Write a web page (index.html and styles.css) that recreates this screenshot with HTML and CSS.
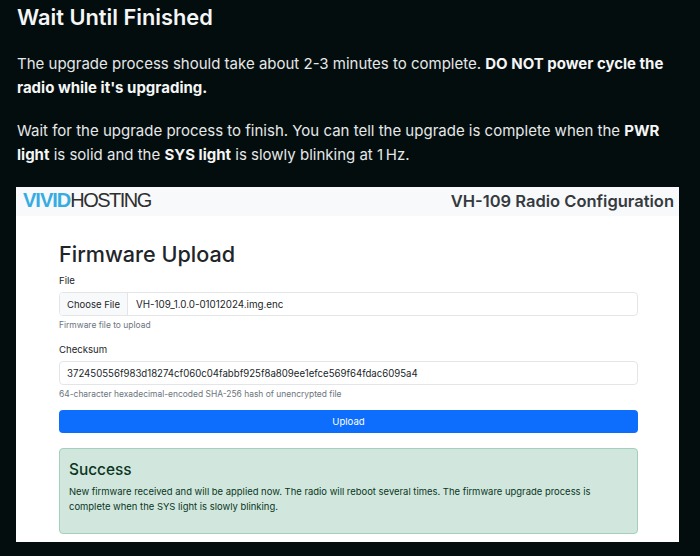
FILE: index.html
```html
<!DOCTYPE html>
<html lang="en">
<head>
<meta charset="utf-8">
<title>Wait Until Finished</title>
<link rel="stylesheet" href="styles.css">
</head>
<body>
<main class="doc">
  <h2 class="doc-title">Wait Until Finished</h2>
  <p class="doc-p">The upgrade process should take about 2-3 minutes to complete. <strong>DO NOT power cycle the radio while it's upgrading.</strong></p>
  <p class="doc-p">Wait for the upgrade process to finish. You can tell the upgrade is complete when the <strong>PWR light</strong> is solid and the <strong>SYS light</strong> is slowly blinking at 1&#8201;Hz.</p>
  <section class="shot">
    <header class="nav">
      <div class="logo"><span class="logo-blue">VIVID</span>HOSTING</div>
      <div class="nav-title">VH-109 Radio Configuration</div>
    </header>
    <div class="content">
      <h1 class="page-title">Firmware Upload</h1>
      <div class="label">File</div>
      <div class="input file-input">
        <span class="file-btn">Choose File</span>
        <span class="file-name">VH-109_1.0.0-01012024.img.enc</span>
      </div>
      <div class="help">Firmware file to upload</div>
      <div class="label label-second">Checksum</div>
      <div class="input text-input">372450556f983d18274cf060c04fabbf925f8a809ee1efce569f64fdac6095a4</div>
      <div class="help">64-character hexadecimal-encoded SHA-256 hash of unencrypted file</div>
      <div class="btn">Upload</div>
      <div class="alert">
        <h4 class="alert-title">Success</h4>
        <p class="alert-text">New firmware received and will be applied now. The radio will reboot several times. The firmware upgrade process is complete when the SYS light is slowly blinking.</p>
      </div>
    </div>
  </section>
</main>
</body>
</html>
```
FILE: styles.css
```css
* { box-sizing: border-box; }
html, body { margin: 0; height: 100%; }
body {
  background: #030d0e;
  color: #e6e8e8;
  font-family: Inter, "Liberation Sans", sans-serif;
  overflow: hidden;
}
.doc { padding: 3px 21px 0 17px; }
.doc-title {
  margin: 0 0 20px;
  font-size: 21.8px;
  line-height: 29px;
  font-weight: 600;
  color: #f5f6f6;
}
.doc-p {
  margin: 0 0 19px;
  font-size: 15px;
  line-height: 24px;
}
.doc-p strong { font-weight: 700; color: #f5f6f6; }
.shot {
  margin: 20px 0 0 -1px;
  width: 663px;
  height: 355px;
  background: #fff;
  color: #212529;
  overflow: hidden;
}
.nav {
  height: 29px;
  background: #f8f9fa;
  display: flex;
  align-items: center;
  justify-content: space-between;
  padding: 0 5px 2px 7px;
}
.logo {
  font-family: "Liberation Sans", Arial, sans-serif;
  font-size: 20px;
  letter-spacing: -1.5px;
  color: #2f2f2f;
}
.logo-blue { color: #35ade3; font-weight: 700; letter-spacing: -1px; }
.nav-title { font-size: 16.5px; font-weight: 600; color: #343a40; }
.content { padding: 23px 41px 0 43px; }
.page-title {
  margin: 0 0 5px;
  font-size: 21.6px;
  line-height: 30px;
  font-weight: 500;
  color: #212529;
}
.label { font-size: 9.6px; line-height: 14px; margin-bottom: 4px; color: #212529; }
.label-second { margin-top: 12px; }
.input {
  height: 24px;
  border: 1px solid #e3e6e9;
  border-radius: 4px;
  font-size: 9.65px;
  display: flex;
  align-items: center;
  background: #fff;
  overflow: hidden;
}
.file-btn {
  align-self: stretch;
  display: flex;
  align-items: center;
  padding: 0 7px;
  font-size: 9.5px;
  background: #f8f9fa;
  border-right: 1px solid #e3e6e9;
}
.file-name { padding-left: 8px; font-size: 9.8px; }
.text-input { padding-left: 7px; }
.help { font-size: 8.45px; line-height: 12px; margin-top: 3px; color: #6c757d; }
.btn {
  margin-top: 10px;
  height: 23px;
  background: #0d6efd;
  color: #fff;
  border-radius: 4px;
  font-size: 9.6px;
  display: flex;
  align-items: center;
  justify-content: center;
}
.alert {
  margin-top: 15px;
  height: 86px;
  background: #d1e7dd;
  border: 1px solid #a3cfbb;
  border-radius: 4px;
  padding: 11px 9px;
  color: #0a3622;
}
.alert-title {
  margin: 0 0 5px;
  font-size: 15.4px;
  line-height: 19px;
  font-weight: 500;
}
.alert-text { margin: 0; font-size: 9.45px; line-height: 15px; }
```
